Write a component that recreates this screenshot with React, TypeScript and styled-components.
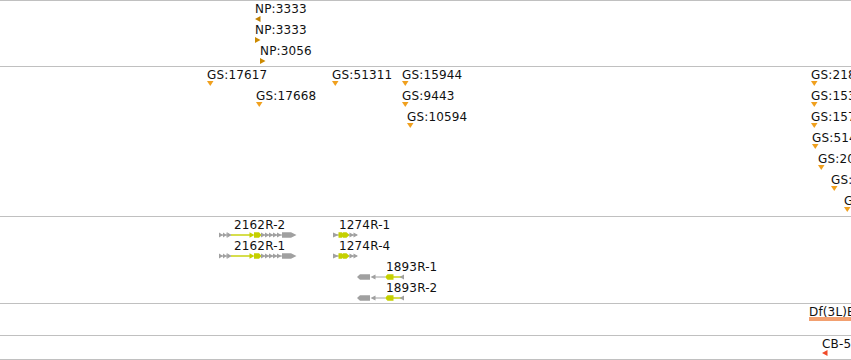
import React from 'react';
import styled, { createGlobalStyle } from 'styled-components';

const GlobalStyle = createGlobalStyle`
  html, body { margin: 0; padding: 0; background: #ffffff; overflow: hidden; }
  body { font-family: "DejaVu Sans", "Noto Sans", sans-serif; }
`;

const Browser = styled.div`
  width: 851px;
  display: flex;
  flex-direction: column;
`;

const Track = styled.section<{ $height: number; $last?: boolean }>`
  position: relative;
  box-sizing: border-box;
  height: ${(p) => p.$height}px;
  border-top: 1px solid #c0c0c0;
  ${(p) => (p.$last ? 'border-bottom: 1px solid #c0c0c0;' : '')}
  overflow: hidden;
`;

const Feature = styled.div`
  position: absolute;
  display: flex;
  flex-direction: column;
  align-items: flex-start;
`;

const Label = styled.span<{ $indent?: number }>`
  display: block;
  font-size: 12px;
  line-height: 12px;
  letter-spacing: 0.15px;
  color: #111111;
  white-space: nowrap;
  margin-left: ${(p) => p.$indent ?? 0}px;
`;

const Glyph = styled.svg<{ $gap: number }>`
  display: block;
  flex: none;
  margin-top: ${(p) => p.$gap}px;
`;

const Bar = styled.div<{ $color: string }>`
  width: 80px;
  height: 4px;
  margin-top: -1px;
  background: ${(p) => p.$color};
`;

type Dir = 'left' | 'right' | 'down';

const Triangle: React.FC<{ dir: Dir; color: string; gap: number }> = ({ dir, color, gap }) => {
  if (dir === 'down') {
    return (
      <Glyph $gap={gap} width={7} height={5} viewBox="0 0 7 5">
        <polygon points="0,0 6.5,0 3.25,5" fill={color} />
      </Glyph>
    );
  }
  const pts = dir === 'left' ? '0,3 5.5,0 5.5,6' : '0,0 5.5,3 0,6';
  return (
    <Glyph $gap={gap} width={6} height={6} viewBox="0 0 6 6">
      <polygon points={pts} fill={color} />
    </Glyph>
  );
};

const GRAY = '#a0a0a0';
const CDS = '#c5d000';

const Gene2162: React.FC = () => (
  <Glyph $gap={1} width={78} height={6} viewBox="0 0 78 6">
    <line x1={0} y1={3} x2={12} y2={3} stroke={GRAY} strokeWidth={1} />
    <polygon points="0,0.5 4,3 0,5.5" fill={GRAY} />
    <polygon points="4,0.5 7.5,3 4,5.5" fill={GRAY} />
    <rect x={7.5} y={0.5} width={1.2} height={5} fill={GRAY} />
    <polygon points="8.5,0.5 12.5,3 8.5,5.5" fill={GRAY} />
    <line x1={12} y1={3} x2={31} y2={3} stroke={CDS} strokeWidth={1.4} />
    <polygon points="30.5,0.3 35.5,3 30.5,5.7" fill={CDS} />
    <polygon points="35,0.3 40,0.3 42.5,3 40,5.7 35,5.7" fill={CDS} />
    <line x1={42} y1={3} x2={64} y2={3} stroke={GRAY} strokeWidth={1} />
    <polygon points="42,0.5 46.5,3 42,5.5" fill={GRAY} />
    <polygon points="46,0.5 50.5,3 46,5.5" fill={GRAY} />
    <polygon points="50,0.5 54.5,3 50,5.5" fill={GRAY} />
    <polygon points="54,0.5 58.5,3 54,5.5" fill={GRAY} />
    <polygon points="58,0.5 62.5,3 58,5.5" fill={GRAY} />
    <polygon points="63,0.3 72,0.3 77.5,3 72,5.7 63,5.7" fill={GRAY} />
  </Glyph>
);

const Gene1274: React.FC = () => (
  <Glyph $gap={1} width={26} height={6} viewBox="0 0 26 6">
    <line x1={0} y1={3} x2={24} y2={3} stroke={GRAY} strokeWidth={1} />
    <polygon points="0,0.5 5.5,3 0,5.5" fill={GRAY} />
    <polygon points="5.5,0.3 9,0.3 11.5,3 9,5.7 5.5,5.7" fill={CDS} />
    <polygon points="10,0.3 13.5,0.3 16.5,3 13.5,5.7 10,5.7" fill={CDS} />
    <polygon points="16.5,0.5 21,3 16.5,5.5" fill={GRAY} />
    <polygon points="20.5,0.5 25,3 20.5,5.5" fill={GRAY} />
  </Glyph>
);

const Gene1893: React.FC = () => (
  <Glyph $gap={1} width={47} height={6} viewBox="0 0 47 6">
    <polygon points="0,3 3,0.3 13,0.3 13,5.7 3,5.7" fill={GRAY} />
    <polygon points="13.5,3 18.5,0.5 18.5,5.5" fill={GRAY} />
    <line x1={18} y1={3} x2={28} y2={3} stroke={GRAY} strokeWidth={1} />
    <polygon points="28,3 30.5,0.3 36.5,0.3 36.5,5.7 30.5,5.7" fill={CDS} />
    <line x1={36} y1={3} x2={45} y2={3} stroke={CDS} strokeWidth={1.4} />
    <polygon points="42.5,3 47,0.5 47,5.5" fill={GRAY} />
  </Glyph>
);

type Marker = { label: string; x: number; row: number; dir: Dir; color: string };

const NP_COLOR = '#cc8a00';
const GS_COLOR = '#f0a01e';

const npFeatures: Marker[] = [
  { label: 'NP:3333', x: 255, row: 0, dir: 'left', color: '#c08000' },
  { label: 'NP:3333', x: 255, row: 1, dir: 'right', color: NP_COLOR },
  { label: 'NP:3056', x: 260, row: 2, dir: 'right', color: NP_COLOR },
];

const gsFeatures: Marker[] = [
  { label: 'GS:17617', x: 207, row: 0, dir: 'down', color: GS_COLOR },
  { label: 'GS:17668', x: 256, row: 1, dir: 'down', color: GS_COLOR },
  { label: 'GS:51311', x: 332, row: 0, dir: 'down', color: GS_COLOR },
  { label: 'GS:15944', x: 402, row: 0, dir: 'down', color: GS_COLOR },
  { label: 'GS:9443', x: 402, row: 1, dir: 'down', color: GS_COLOR },
  { label: 'GS:10594', x: 407, row: 2, dir: 'down', color: GS_COLOR },
  { label: 'GS:21852', x: 811, row: 0, dir: 'down', color: GS_COLOR },
  { label: 'GS:15392', x: 811, row: 1, dir: 'down', color: GS_COLOR },
  { label: 'GS:15716', x: 811, row: 2, dir: 'down', color: GS_COLOR },
  { label: 'GS:51412', x: 812, row: 3, dir: 'down', color: GS_COLOR },
  { label: 'GS:20381', x: 818, row: 4, dir: 'down', color: GS_COLOR },
  { label: 'GS:19877', x: 831, row: 5, dir: 'down', color: GS_COLOR },
  { label: 'GS:8826', x: 844, row: 6, dir: 'down', color: GS_COLOR },
];

type GeneKind = '2162' | '1274' | '1893';
type Gene = { label: string; x: number; labelX: number; row: number; kind: GeneKind };

const genes: Gene[] = [
  { label: '2162R-2', x: 219, labelX: 234, row: 0, kind: '2162' },
  { label: '2162R-1', x: 219, labelX: 234, row: 1, kind: '2162' },
  { label: '1274R-1', x: 333, labelX: 339, row: 0, kind: '1274' },
  { label: '1274R-4', x: 333, labelX: 339, row: 1, kind: '1274' },
  { label: '1893R-1', x: 357, labelX: 386, row: 2, kind: '1893' },
  { label: '1893R-2', x: 357, labelX: 386, row: 3, kind: '1893' },
];

const PITCH = 21;

const geneGlyph = (kind: GeneKind) =>
  kind === '2162' ? <Gene2162 /> : kind === '1274' ? <Gene1274 /> : <Gene1893 />;

const MarkerTrack: React.FC<{ items: Marker[]; top: number; gap: number }> = ({ items, top, gap }) => (
  <>
    {items.map((f, i) => (
      <Feature key={i} style={{ left: f.x, top: top + f.row * PITCH }}>
        <Label>{f.label}</Label>
        <Triangle dir={f.dir} color={f.color} gap={gap} />
      </Feature>
    ))}
  </>
);

export default function App() {
  return (
    <>
      <GlobalStyle />
      <Browser>
        <Track $height={66}>
          <MarkerTrack items={npFeatures} top={2} gap={1} />
        </Track>
        <Track $height={150}>
          <MarkerTrack items={gsFeatures} top={2} gap={0} />
        </Track>
        <Track $height={87}>
          {genes.map((g, i) => (
            <Feature key={i} style={{ left: g.x, top: 2 + g.row * PITCH }}>
              <Label $indent={g.labelX - g.x}>{g.label}</Label>
              {geneGlyph(g.kind)}
            </Feature>
          ))}
        </Track>
        <Track $height={32}>
          <Feature style={{ left: 809, top: 2 }}>
            <Label>Df(3L)ED4287</Label>
            <Bar $color="#f2a070" />
          </Feature>
        </Track>
        <Track $height={25} $last>
          <Feature style={{ left: 822, top: 2 }}>
            <Label>CB-5737-3</Label>
            <Triangle dir="left" color="#f04a28" gap={0} />
          </Feature>
        </Track>
      </Browser>
    </>
  );
}
